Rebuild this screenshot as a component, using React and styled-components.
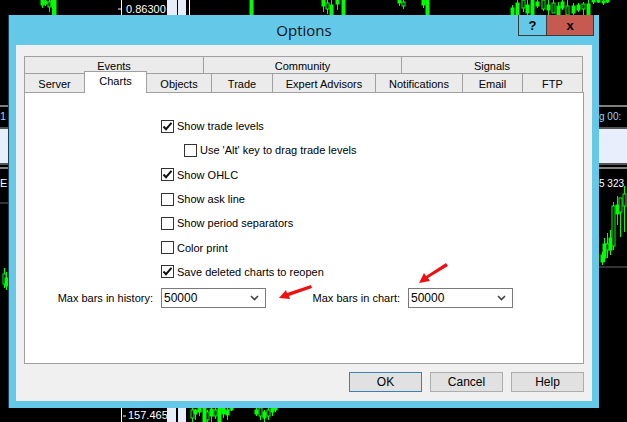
import React from "react";
import styled, { createGlobalStyle } from "styled-components";

const GlobalStyle = createGlobalStyle`
  html, body { margin: 0; padding: 0; background: #000; }
  body { font-family: "Liberation Sans", Arial, sans-serif; }
`;

const topTabs = [
  { label: "Events", w: 180 },
  { label: "Community", w: 199 },
  { label: "Signals", w: 182 },
];

const bottomTabs = [
  { label: "Server", w: 61 },
  { label: "Charts", w: 63, active: true },
  { label: "Objects", w: 66 },
  { label: "Trade", w: 62 },
  { label: "Expert Advisors", w: 104 },
  { label: "Notifications", w: 88 },
  { label: "Email", w: 61 },
  { label: "FTP", w: 61 },
];

const options = [
  { label: "Show trade levels", checked: true },
  { label: "Use 'Alt' key to drag trade levels", indent: true },
  { label: "Show OHLC", checked: true },
  { label: "Show ask line" },
  { label: "Show period separators" },
  { label: "Color print" },
  { label: "Save deleted charts to reopen", checked: true },
];

// candles behind the dialog: [x, top, bottom, bodyTop, bodyBottom, hollow]
const candles = [
  [41, 0, 8, 0, 5], [44, 0, 6, 1, 4], [48, 0, 12, 2, 7, true], [51, 0, 15, 0, 6],
  [53, 0, 15, 0, 15], [250, 0, 15, 0, 15], [322, 0, 12, 0, 6], [326, 0, 14, 3, 9, true],
  [330, 0, 15, 5, 15], [336, 0, 10, 0, 4], [342, 0, 15, 0, 15], [398, 0, 6, 0, 3],
  [402, 0, 9, 2, 6, true], [422, 0, 8, 0, 5], [426, 0, 15, 0, 15],
  [511, 5, 15, 8, 15], [516, 0, 15, 3, 15], [522, 0, 12, 0, 8, true], [526, 0, 15, 5, 13],
  [531, 0, 15, 0, 15], [536, 0, 8, 2, 6], [542, 0, 11, 0, 9, true], [547, 0, 15, 5, 10],
  [552, 0, 13, 3, 13, true], [557, 2, 15, 6, 15], [561, 0, 10, 2, 8], [566, 0, 15, 6, 15, true],
  [572, 3, 15, 6, 13], [577, 3, 12, 5, 10], [582, 2, 15, 4, 9, true], [587, 0, 15, 4, 15],
  [592, 0, 4, 0, 2], [597, 0, 3, 0, 2], [602, 0, 5, 1, 3], [606, 0, 3, 0, 2],
  [191, 408, 422, 410, 418, true], [194, 409, 420, 410, 414], [198, 408, 416, 408, 412],
  [203, 408, 422, 408, 422], [206, 410, 422, 412, 420, true], [210, 408, 422, 409, 416],
  [214, 408, 419, 410, 416, true], [218, 408, 422, 408, 422], [222, 408, 418, 408, 414],
  [226, 408, 420, 410, 415], [230, 408, 411, 408, 410], [255, 408, 416, 410, 414],
  [259, 408, 420, 408, 416, true], [263, 410, 422, 412, 418], [267, 408, 420, 410, 416, true],
  [271, 408, 416, 408, 412], [274, 408, 412, 408, 410],
  [601, 252, 265, 255, 262], [603, 238, 262, 244, 258], [606, 233, 258, 244, 250, true],
  [609, 230, 255, 238, 250], [612, 202, 250, 206, 246, true], [616, 196, 225, 205, 214],
  [619, 198, 237, 198, 212, true], [623, 186, 232, 194, 206, true],
  [3, 268, 288, 274, 284, true], [5, 272, 290, 278, 286],
];

const ChartBackdrop = () => (
  <Backdrop width="627" height="422" viewBox="0 0 627 422">
    {candles.map(([x, t, b, bt, bb, hollow], i) => (
      <g key={i}>
        <line x1={x + 1.5} y1={t} x2={x + 1.5} y2={b} stroke="#00ff00" strokeWidth="1" />
        <rect
          x={x}
          y={bt}
          width="3"
          height={bb - bt}
          fill={hollow ? "#000" : "#00ff00"}
          stroke="#00ff00"
          strokeWidth="1"
        />
      </g>
    ))}
    <line x1="121.5" y1="0" x2="121.5" y2="18" stroke="#fff" />
    <line x1="118" y1="9" x2="122" y2="9" stroke="#fff" />
    <text x="126" y="13" fill="#fff" fontSize="11" fontFamily="Liberation Sans, sans-serif">0.86300</text>
    <rect x="167" y="0" width="10" height="15" fill="#e8eef9" />
    <rect x="178" y="0" width="8" height="15" fill="#e8eef9" />
    <line x1="189.5" y1="0" x2="189.5" y2="15" stroke="#fff" />
    <line x1="121.5" y1="408" x2="121.5" y2="422" stroke="#fff" />
    <line x1="123" y1="416" x2="126" y2="416" stroke="#fff" />
    <text x="128" y="419" fill="#fff" fontSize="11" fontFamily="Liberation Sans, sans-serif">157.465</text>
    <rect x="167" y="408" width="9" height="14" fill="#e8eef9" />
    <rect x="178" y="408" width="8" height="14" fill="#e8eef9" />
    {/* right strip */}
    <line x1="598" y1="106" x2="627" y2="106" stroke="#fff" />
    <text x="599" y="120" fill="#9ecfff" fontSize="10" fontFamily="Liberation Sans, sans-serif">g 00:</text>
    <rect x="598" y="127" width="29" height="2" fill="#555" />
    <rect x="598" y="129" width="29" height="34" fill="#e8eefb" />
    <rect x="598" y="163" width="29" height="2" fill="#555" />
    <line x1="598" y1="168" x2="627" y2="168" stroke="#fff" />
    <text x="599" y="187" fill="#fff" fontSize="10" fontFamily="Liberation Sans, sans-serif">5 323</text>
    <line x1="598" y1="267" x2="627" y2="267" stroke="#666" />
    {/* left strip */}
    <line x1="0" y1="106" x2="8" y2="106" stroke="#fff" />
    <text x="0" y="120" fill="#9ecfff" fontSize="11" fontFamily="Liberation Sans, sans-serif">1</text>
    <rect x="0" y="127" width="8" height="2" fill="#555" />
    <rect x="0" y="129" width="8" height="34" fill="#e8eefb" />
    <rect x="0" y="163" width="8" height="2" fill="#555" />
    <line x1="0" y1="168" x2="8" y2="168" stroke="#fff" />
    <text x="0" y="187" fill="#fff" fontSize="11" fontFamily="Liberation Sans, sans-serif">E</text>
    <line x1="0" y1="203" x2="8" y2="203" stroke="#666" />
  </Backdrop>
);

const Arrows = () => (
  <ArrowLayer width="627" height="422" viewBox="0 0 627 422">
    <polygon points="311,285 312,288 289,296 290,299 279,298 286,290 287,293" fill="#ee1111" />
    <polygon points="446,263 448,266 428,278 430,281 419,283 424,273 426,276" fill="#ee1111" />
  </ArrowLayer>
);

const Check = () => (
  <svg width="11" height="11" viewBox="0 0 11 11">
    <path d="M1.5 5.5 L4 8.2 L9.5 1.8" fill="none" stroke="#111" strokeWidth="2" />
  </svg>
);

const Chevron = () => (
  <svg width="9" height="6" viewBox="0 0 9 6">
    <path d="M1 1 L4.5 4.5 L8 1" fill="none" stroke="#444" strokeWidth="1.6" />
  </svg>
);

const Combo = ({ value, width }) => (
  <Select $width={width}>
    <span>{value}</span>
    <Chevron />
  </Select>
);

export default function App() {
  return (
    <>
      <GlobalStyle />
      <Desktop>
        <ChartBackdrop />
        <Window>
          <TitleBar>
            <Title>Options</Title>
            <CaptionButtons>
              <HelpCaption>?</HelpCaption>
              <CloseCaption>x</CloseCaption>
            </CaptionButtons>
          </TitleBar>
          <Client>
            <Tabs>
              <TabRow>
                {topTabs.map((t, i) => (
                  <Tab key={t.label} $w={t.w} $first={i === 0}>{t.label}</Tab>
                ))}
              </TabRow>
              <TabRow $lower>
                {bottomTabs.map((t, i) =>
                  t.active ? (
                    <ActiveTab key={t.label} $w={t.w}>{t.label}</ActiveTab>
                  ) : (
                    <Tab key={t.label} $w={t.w} $first={i === 0}>{t.label}</Tab>
                  )
                )}
              </TabRow>
            </Tabs>
            <Panel>
              <OptionList>
                {options.map((o) => (
                  <OptionRow key={o.label} $indent={o.indent}>
                    <Box>{o.checked && <Check />}</Box>
                    {o.label}
                  </OptionRow>
                ))}
              </OptionList>
              <FieldRow>
                <Field>
                  <FieldLabel $width={89}>Max bars in history:</FieldLabel>
                  <Combo value="50000" width={105} />
                </Field>
                <Field>
                  <FieldLabel $width={83}>Max bars in chart:</FieldLabel>
                  <Combo value="50000" width={105} />
                </Field>
              </FieldRow>
            </Panel>
            <ButtonBar>
              <DialogButton $default>OK</DialogButton>
              <DialogButton>Cancel</DialogButton>
              <DialogButton>Help</DialogButton>
            </ButtonBar>
          </Client>
        </Window>
        <Arrows />
      </Desktop>
    </>
  );
}

const Desktop = styled.div`
  position: relative;
  width: 627px;
  height: 422px;
  overflow: hidden;
  background: #000;
`;

const Backdrop = styled.svg`
  position: absolute;
  left: 0;
  top: 0;
`;

const ArrowLayer = styled.svg`
  position: absolute;
  left: 0;
  top: 0;
  pointer-events: none;
`;

const Window = styled.div`
  position: absolute;
  left: 8px;
  top: 15px;
  width: 591px;
  height: 393px;
  box-sizing: border-box;
  background: #64c8e8;
  border-left: 1px solid #1f3f52;
  display: flex;
  flex-direction: column;
  padding: 0 7px 7px 7px;
`;

const TitleBar = styled.div`
  height: 30px;
  flex: none;
  display: flex;
  align-items: center;
  justify-content: center;
  position: relative;
`;

const Title = styled.div`
  font-family: "Open Sans", "Liberation Sans", sans-serif;
  font-size: 15px;
  color: #111;
`;

const CaptionButtons = styled.div`
  position: absolute;
  top: 0;
  right: -2px;
  display: flex;
  height: 21px;
  border: 1px solid #3a3a3a;
  border-top: none;
  box-sizing: border-box;
`;

const HelpCaption = styled.div`
  width: 27px;
  display: flex;
  align-items: center;
  justify-content: center;
  font-weight: bold;
  font-size: 13px;
  color: #000;
  border-right: 1px solid #3a3a3a;
`;

const CloseCaption = styled.div`
  width: 46px;
  display: flex;
  align-items: center;
  justify-content: center;
  background: #c75a50;
  font-weight: bold;
  font-size: 13px;
  color: #000;
`;

const Client = styled.div`
  flex: 1;
  background: #f0f0f0;
  display: flex;
  flex-direction: column;
  padding: 11px 7px 0 8px;
`;

const Tabs = styled.div`
  display: flex;
  flex-direction: column;
`;

const TabRow = styled.div`
  display: flex;
  height: ${(p) => (p.$lower ? 19 : 17)}px;
`;

const Tab = styled.div`
  flex: none;
  width: ${(p) => p.$w}px;
  margin-left: ${(p) => (p.$first ? 0 : -1)}px;
  box-sizing: border-box;
  background: #ebebeb;
  border: 1px solid #a0a0a0;
  border-bottom: none;
  display: flex;
  align-items: center;
  justify-content: center;
  font-size: 11px;
  color: #000;
  white-space: nowrap;
  padding-top: 1px;
`;

const ActiveTab = styled(Tab)`
  background: #fff;
  height: 22px;
  margin-top: -2px;
  position: relative;
  z-index: 1;
  align-items: flex-start;
  padding-top: 3px;
`;

const Panel = styled.div`
  width: 560px;
  height: 272px;
  box-sizing: border-box;
  background: #fff;
  border: 1px solid #a0a0a0;
  display: flex;
  flex-direction: column;
`;

const OptionList = styled.div`
  display: grid;
  grid-auto-rows: 24.3px;
  padding: 21px 0 0 136px;
`;

const OptionRow = styled.div`
  display: flex;
  align-items: center;
  gap: 3px;
  font-size: 11px;
  color: #000;
  padding-left: ${(p) => (p.$indent ? 23 : 0)}px;
`;

const Box = styled.div`
  width: 13px;
  height: 13px;
  box-sizing: border-box;
  border: 1px solid #333;
  background: #fff;
  display: flex;
  align-items: center;
  justify-content: center;
`;

const FieldRow = styled.div`
  display: flex;
  gap: 51px;
  padding: 4px 0 0 39px;
`;

const Field = styled.div`
  display: flex;
  align-items: center;
  gap: 8px;
`;

const FieldLabel = styled.div`
  width: ${(p) => p.$width}px;
  display: flex;
  justify-content: flex-end;
  font-size: 11px;
  color: #000;
  white-space: nowrap;
`;

const Select = styled.div`
  width: ${(p) => p.$width}px;
  height: 20px;
  box-sizing: border-box;
  border: 1px solid #7a7a7a;
  background: #fff;
  display: flex;
  align-items: center;
  justify-content: space-between;
  padding: 0 6px 0 2px;
  font-size: 12px;
  color: #000;
`;

const ButtonBar = styled.div`
  display: flex;
  justify-content: flex-end;
  gap: 8px;
  padding-top: 8px;
  width: 560px;
`;

const DialogButton = styled.div`
  width: 73px;
  height: 20px;
  box-sizing: border-box;
  background: #e1e1e1;
  border: 1px solid ${(p) => (p.$default ? "#3c7fb1" : "#adadad")};
  display: flex;
  align-items: center;
  justify-content: center;
  font-size: 12px;
  color: #000;
`;
